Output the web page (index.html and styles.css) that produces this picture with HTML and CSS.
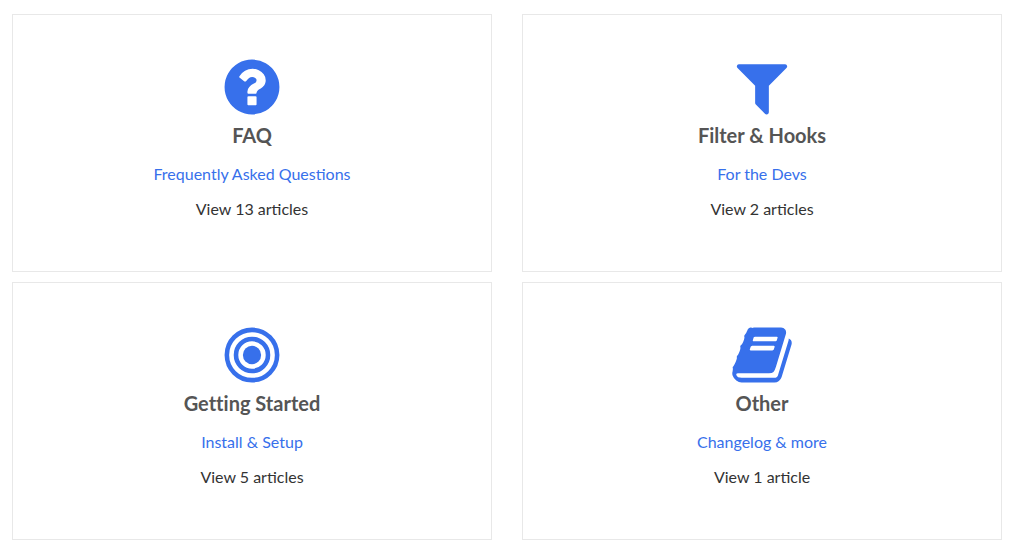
FILE: index.html
```html
<!DOCTYPE html>
<html lang="en">
<head>
  <meta charset="UTF-8" />
  <meta name="viewport" content="width=device-width, initial-scale=1.0" />
  <title>Documentation</title>
  <link rel="stylesheet" href="styles.css">
</head>
<body>
  <main class="categories">
    <section class="category">
      <svg class="category-icon" viewBox="0 0 1792 1792" aria-hidden="true">
        <path d="M1024 1376v-192q0-14-9-23t-23-9h-192q-14 0-23 9t-9 23v192q0 14 9 23t23 9h192q14 0 23-9t9-23zm256-672q0-88-55.500-163t-138.500-116-170-41q-243 0-371 213-15 24 8 42l132 100q7 6 19 6 16 0 25-12 53-68 86-92 34-24 86-24 48 0 85.500 26t37.500 59q0 38-20 61t-68 45q-63 28-115.500 86.500t-52.500 125.500v36q0 14 9 23t23 9h192q14 0 23-9t9-23q0-19 21.500-49.500t54.500-49.500q32-18 49-28.500t46-35 44.500-48 28-60.500 12.500-81zm384 192q0 209-103 385.500t-279.500 279.500-385.500 103-385.500-103-279.500-279.500-103-385.500 103-385.500 279.500-279.500 385.500-103 385.500 103 279.500 279.500 103 385.500z"/>
      </svg>
      <h2>FAQ</h2>
      <p><a href="#faq">Frequently Asked Questions</a></p>
      <p>View 13 articles</p>
    </section>

    <section class="category">
      <svg class="category-icon" viewBox="0 0 1792 1792" aria-hidden="true">
        <path d="M1595 295q17 41-14 70l-493 493v742q0 42-39 59-13 5-25 5-27 0-45-19l-256-256q-19-19-19-45v-486l-493-493q-31-29-14-70 17-39 59-39h1280q42 0 59 39z"/>
      </svg>
      <h2>Filter &amp; Hooks</h2>
      <p><a href="#filter-hooks">For the Devs</a></p>
      <p>View 2 articles</p>
    </section>

    <section class="category">
      <svg class="category-icon" viewBox="0 0 1792 1792" aria-hidden="true">
        <circle cx="896" cy="896" r="256"/>
        <circle class="ring" cx="896" cy="896" r="448"/>
        <circle class="ring" cx="896" cy="896" r="704"/>
      </svg>
      <h2>Getting Started</h2>
      <p><a href="#getting-started">Install &amp; Setup</a></p>
      <p>View 5 articles</p>
    </section>

    <section class="category">
      <svg class="category-icon" viewBox="0 0 1792 1792" aria-hidden="true">
        <path d="M1703 478q40 57 18 129l-275 906q-19 64-76.500 107.500t-122.500 43.500h-923q-77 0-148.500-53.500t-99.500-131.500q-24-67-2-127 0-4 3-27t4-37q1-8-3-21.500t-3-19.500q2-11 8-21t16.500-23.500 16.500-23.500q23-38 45-91.500t30-91.500q3-10 .5-30t-.5-28q3-11 17-28t17-23q21-36 42-92t25-90q1-9-2.500-32t.5-28q4-13 22-30.500t22-22.500q19-26 42.500-84.500t27.500-96.500q1-8-3-25.500t-2-26.500q2-8 9-18t18-23 17-21q8-12 16.500-30.500t15-35 16-36 19.500-32 26.500-23.500 36-11.500 47.500 5.500l-1 3q38-9 51-9h761q74 0 114 56t18 130l-274 906q-36 119-71.500 153.500t-128.500 34.500h-869q-27 0-38 15-11 16-1 43 24 70 144 70h923q29 0 56-15.500t35-41.500l300-987q7-22 5-57 38 15 59 43zm-1064 2q-4 13 2 22.500t20 9.500h608q13 0 25.500-9.500t16.500-22.500l21-64q4-13-2-22.500t-20-9.500h-608q-13 0-25.500 9.500t-16.500 22.500zm-83 256q-4 13 2 22.500t20 9.500h608q13 0 25.500-9.500t16.500-22.500l21-64q4-13-2-22.500t-20-9.500h-608q-13 0-25.500 9.500t-16.500 22.500z"/>
      </svg>
      <h2>Other</h2>
      <p><a href="#other">Changelog &amp; more</a></p>
      <p>View 1 article</p>
    </section>
  </main>
</body>
</html>
```

FILE: styles.css
```css
body {
  margin: 0;
  background-color: #fff;
  color: #333;
  font-family: Lato, sans-serif;
  font-size: 16px;
  line-height: 25px;
}
.categories {
  display: grid;
  grid-template-columns: 1fr 1fr;
  gap: 10px 30px;
  padding: 14px 15px 10px 12px;
}
.category {
  padding: 40px 20px;
  border: 1px solid #e8e8e8;
  text-align: center;
}
.category-icon {
  display: block;
  width: 64px;
  height: 64px;
  margin: 0 auto;
  fill: #3770eb;
}
.ring {
  fill: none;
  stroke: #3770eb;
  stroke-width: 128;
}
h2 {
  margin: 0 0 10px;
  color: #555;
  font-size: 20px;
  font-weight: bold;
  font-variant-ligatures: none;
  line-height: 32px;
}
p {
  margin: 0 0 10px;
}
a {
  color: #3770eb;
  text-decoration: none;
}
a:hover {
  text-decoration: underline;
}
```
